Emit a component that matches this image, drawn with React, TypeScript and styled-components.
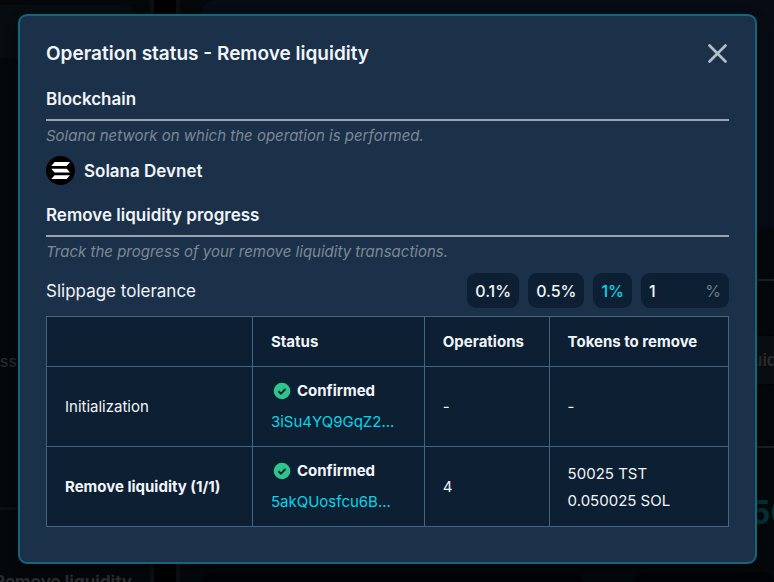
import React from "react";
import styled, { createGlobalStyle, css } from "styled-components";

const Global = createGlobalStyle`
  * { box-sizing: border-box; }
  html, body, #root { height: 100%; }
  body {
    margin: 0;
    background: #04080b;
    color: #f1f5f9;
    font: 16px/24px Inter, "Liberation Sans", sans-serif;
    overflow: hidden;
  }
`;

const Screen = styled.div`
  position: relative;
  min-height: 100%;
  display: flex;
`;

const Behind = styled.div`
  position: absolute;
  inset: 0;
  display: grid;
  grid-template-columns: 150px 30px 1fr;
  overflow: hidden;
  color: #2a2c2e;
`;

const BehindLeft = styled.div`
  display: flex;
  flex-direction: column;
  padding-right: 16px;
`;

const BehindCard = styled.div`
  height: 53px;
  margin-top: 5px;
  background: #070c10;
  border-radius: 0 8px 8px 0;
`;

const BehindLabel = styled.div`
  margin-top: 291px;
`;

const BehindRule = styled.div`
  height: 3px;
  margin: 134px -16px 0 0;
  background: #0c1014;
`;

const BehindTitle = styled.div`
  margin: 60px 0 0 -6px;
  font-weight: 700;
  font-size: 17px;
  white-space: nowrap;
`;

const BehindGutter = styled.div`
  background: #000002;
  border: solid #0b0f14;
  border-width: 0 4px;
`;

const BehindRight = styled.div`
  display: flex;
  flex-direction: column;
  align-items: flex-end;
  background: #04080b;
`;

const BehindHero = styled.div`
  align-self: stretch;
  height: 228px;
  margin-left: 22px;
  border-radius: 12px 0 0 0;
  background: #070b13;
`;

const BehindStrip = styled.div`
  width: 40px;
  margin-top: 51px;
  border-top: 2px solid #1c1e20;
  padding-top: 53px;
`;

const BehindButton = styled.div`
  height: 52px;
  padding: 12px 0 0 18px;
  border-block: 2px solid #02040a;
  background: #0a0e12;
  font-weight: 600;
  font-size: 17px;
  overflow: hidden;
`;

const BehindAmount = styled.div`
  margin-top: 60px;
  padding: 47px 0 0 16px;
  border-top: 2px solid #1c1e20;
  color: #033035;
  font-weight: 700;
  font-size: 32px;
  line-height: 36px;
  overflow: hidden;
  white-space: nowrap;
`;

const BehindFooter = styled.div`
  align-self: stretch;
  display: grid;
  grid-template-columns: 382px 1fr;
  gap: 50px;
  flex: 1;
  margin: 41px 0 0 22px;
`;

const BehindPanel = styled.div`
  background: #010306;
  border-radius: 12px 12px 0 0;
`;

const Dialog = styled.section`
  position: relative;
  flex: 1;
  align-self: flex-start;
  margin: 14px 17px 18px 18px;
  padding: 24px 26px 35px;
  border: 2px solid #14667c;
  border-radius: 9px;
  background: #1b3149;
  box-shadow: 0 4px 12px rgba(0, 0, 0, 0.4);
`;

const Header = styled.header`
  display: flex;
  align-items: center;
  justify-content: space-between;
  height: 26px;
`;

const Title = styled.h1`
  margin: 0;
  padding-top: 2px;
  font-size: 19px;
  font-weight: 600;
  white-space: nowrap;
`;

const CloseButton = styled.button`
  display: flex;
  padding: 0;
  border: 0;
  background: none;
  color: #b4bec9;
  cursor: pointer;
`;

const SectionTitle = styled.h2`
  margin: 21px 0 0;
  padding-bottom: 7px;
  border-bottom: 2px solid #9ba3af;
  font-size: 17px;
  line-height: 25px;
  font-weight: 600;
`;

const Hint = styled.p`
  margin: 3px 0 0;
  color: #7b8996;
  font-size: 15px;
  font-style: italic;
`;

const Chain = styled.div`
  display: flex;
  align-items: center;
  gap: 9px;
  margin-top: 8px;
  margin-bottom: -3px;
  font-size: 17px;
  font-weight: 600;
`;

const Slippage = styled.div`
  display: flex;
  align-items: center;
  gap: 9px;
  height: 35px;
  margin: 9px 0 8px;
  font-size: 17px;
`;

const SlippageLabel = styled.label`
  margin-right: auto;
`;

const fieldBox = css`
  height: 35px;
  border: 0;
  border-radius: 9px;
  background: #0c1f33;
  color: #f1f5f9;
  font: 500 16px/24px Inter, "Liberation Sans", sans-serif;
`;

const Preset = styled.button<{ $active?: boolean }>`
  ${fieldBox}
  padding: 0 8px;
  color: ${(p) => (p.$active ? "#06d6e8" : "#f1f5f9")};
`;

const Amount = styled.div`
  ${fieldBox}
  display: flex;
  align-items: center;
  width: 88px;
  padding: 0 8px;
`;

const AmountInput = styled.input`
  flex: 1;
  min-width: 0;
  padding: 0;
  border: 0;
  outline: 0;
  background: none;
  color: inherit;
  font: inherit;
`;

const Unit = styled.span`
  color: #6e7c8a;
  font-weight: 400;
`;

const Table = styled.table`
  width: 100%;
  border-collapse: collapse;
  table-layout: fixed;
  background: #0c1f33;
  font-size: 15px;
  text-align: left;
`;

const Col = styled.col<{ $share: number }>`
  width: ${(p) => p.$share}%;
`;

const Row = styled.tr<{ $head?: boolean }>`
  height: ${(p) => (p.$head ? 50 : 80)}px;
`;

const cell = css`
  padding: 0 18px;
  border: 1px solid #48637f;
  white-space: nowrap;
`;

const Th = styled.th<{ $plain?: boolean }>`
  ${cell}
  font-weight: ${(p) => (p.$plain ? 400 : 700)};
`;

const Td = styled.td`
  ${cell}
`;

const Status = styled.div`
  display: flex;
  align-items: center;
  gap: 6px;
  padding-left: 2px;
  font-weight: 700;
`;

const TxLink = styled.a`
  display: block;
  margin-top: 7px;
  color: #06d6e8;
  text-decoration: none;
`;

const Token = styled.div`
  line-height: 27px;
`;

const SolanaLogo = () => (
  <svg width="29" height="29" viewBox="0 0 29 29" aria-hidden="true">
    <circle cx="14.5" cy="14.5" r="14.5" fill="#000" />
    <g fill="#fff">
      <path d="M8.6 6.1H24L20.7 9.9H5.3z" />
      <path d="M5.3 12.7H20.7L24 16.5H8.6z" />
      <path d="M8.6 19.2H24L20.7 23H5.3z" />
    </g>
  </svg>
);

const CheckIcon = () => (
  <svg width="18" height="18" viewBox="0 0 18 18" aria-hidden="true">
    <circle cx="9" cy="9" r="8.3" fill="#30c48d" />
    <path d="M5.4 9.2l2.5 2.4 4.7-4.8" fill="none" stroke="#0c1f33" strokeWidth="1.9" />
  </svg>
);

const CloseIcon = () => (
  <svg width="24" height="24" viewBox="0 0 24 24" aria-hidden="true">
    <path d="M4.5 4.5l16 16M20.5 4.5l-16 16" fill="none" stroke="currentColor" strokeWidth="2.7" strokeLinecap="round" />
  </svg>
);

const Confirmed = ({ tx }: { tx: string }) => (
  <Td>
    <Status>
      <CheckIcon />
      Confirmed
    </Status>
    <TxLink href="#">{tx}</TxLink>
  </Td>
);

export default function App() {
  return (
    <Screen>
      <Global />
      <Behind aria-hidden="true">
        <BehindLeft>
          <BehindCard />
          <BehindLabel>ss</BehindLabel>
          <BehindRule />
          <BehindTitle>Remove liquidity</BehindTitle>
        </BehindLeft>
        <BehindGutter />
        <BehindRight>
          <BehindHero />
          <BehindStrip>
            <BehindButton>uid</BehindButton>
            <BehindAmount>50</BehindAmount>
          </BehindStrip>
          <BehindFooter>
            <BehindPanel />
            <BehindPanel />
          </BehindFooter>
        </BehindRight>
      </Behind>
      <Dialog role="dialog" aria-labelledby="title">
        <Header>
          <Title id="title">Operation status - Remove liquidity</Title>
          <CloseButton aria-label="Close">
            <CloseIcon />
          </CloseButton>
        </Header>
        <SectionTitle>Blockchain</SectionTitle>
        <Hint>Solana network on which the operation is performed.</Hint>
        <Chain>
          <SolanaLogo />
          Solana Devnet
        </Chain>
        <SectionTitle>Remove liquidity progress</SectionTitle>
        <Hint>Track the progress of your remove liquidity transactions.</Hint>
        <Slippage>
          <SlippageLabel htmlFor="slippage">Slippage tolerance</SlippageLabel>
          <Preset>0.1%</Preset>
          <Preset>0.5%</Preset>
          <Preset $active>1%</Preset>
          <Amount>
            <AmountInput id="slippage" defaultValue="1" />
            <Unit>%</Unit>
          </Amount>
        </Slippage>
        <Table>
          <colgroup>
            <Col $share={30.2} />
            <Col $share={25.2} />
            <Col $share={18.3} />
            <Col $share={26.3} />
          </colgroup>
          <thead>
            <Row $head>
              <Td />
              <Th scope="col">Status</Th>
              <Th scope="col">Operations</Th>
              <Th scope="col">Tokens to remove</Th>
            </Row>
          </thead>
          <tbody>
            <Row>
              <Th scope="row" $plain>Initialization</Th>
              <Confirmed tx="3iSu4YQ9GqZ2..." />
              <Td>-</Td>
              <Td>-</Td>
            </Row>
            <Row>
              <Th scope="row">Remove liquidity (1/1)</Th>
              <Confirmed tx="5akQUosfcu6B..." />
              <Td>4</Td>
              <Td>
                <Token>50025 TST</Token>
                <Token>0.050025 SOL</Token>
              </Td>
            </Row>
          </tbody>
        </Table>
      </Dialog>
    </Screen>
  );
}
